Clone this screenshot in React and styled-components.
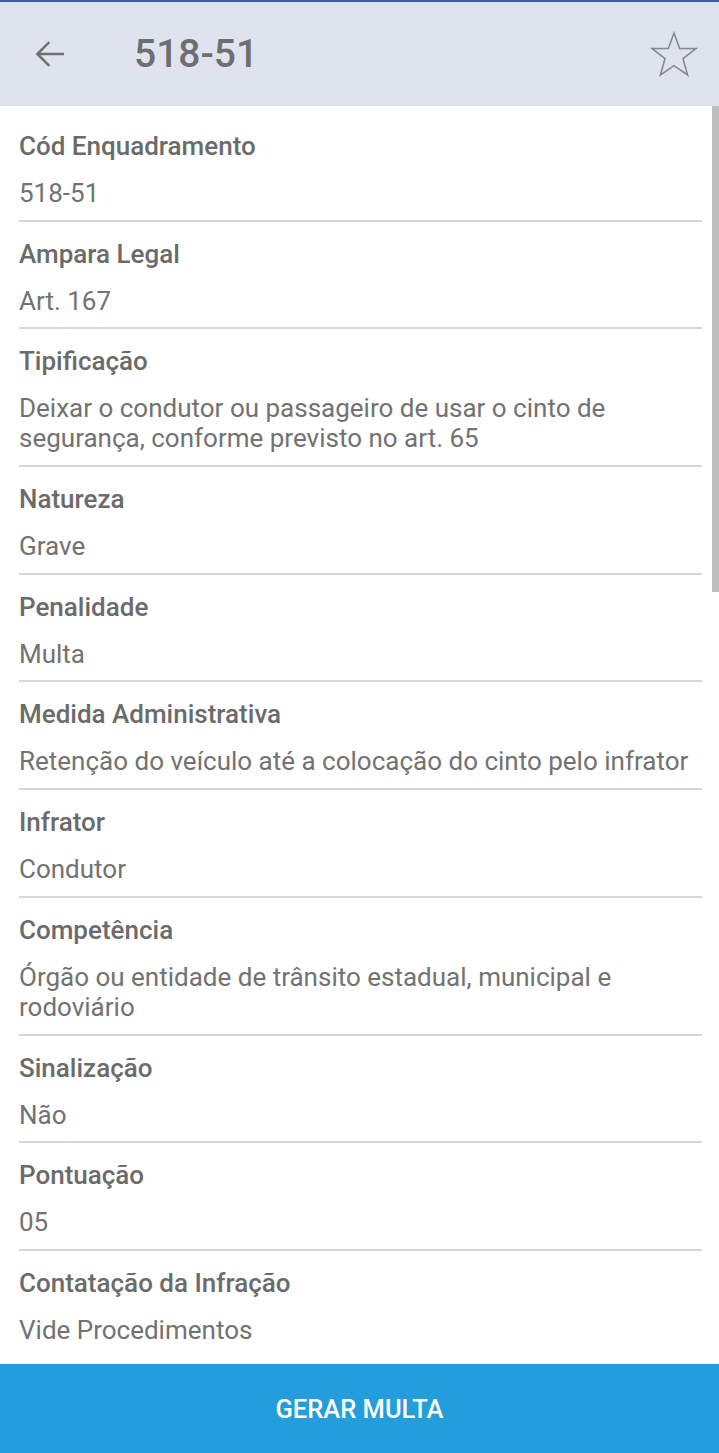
import React from 'react';
import styled, { createGlobalStyle } from 'styled-components';

const GlobalStyle = createGlobalStyle`
  html, body {
    margin: 0;
    padding: 0;
    background: #ffffff;
    font-family: Roboto, "Noto Sans", "Liberation Sans", sans-serif;
  }
`;

const Page = styled.div`
  position: relative;
  width: 719px;
  height: 1453px;
  display: flex;
  flex-direction: column;
  overflow: hidden;
  background: #ffffff;
`;

const Header = styled.header`
  height: 104px;
  flex-shrink: 0;
  display: flex;
  align-items: center;
  background: #dfe3ee;
  border-top: 2px solid #3f5f9a;
  padding: 0 20px 0 31px;
`;

const IconButton = styled.button`
  border: 0;
  background: transparent;
  padding: 0;
  display: flex;
  align-items: center;
  justify-content: center;
  color: #6f6f6f;
`;

const Title = styled.h1`
  margin: 0 0 0 65px;
  flex: 1;
  font-size: 39px;
  font-weight: 500;
  color: #6e6e6e;
`;

const Content = styled.main`
  flex: 1;
  padding: 8px 17px 0 19px;
`;

const Row = styled.section`
  padding: 17px 0 11.7px;
  border-bottom: ${({ $last }) => ($last ? '0' : '2px solid #d6d6d6')};
`;

const Label = styled.div`
  font-size: 26px;
  line-height: 30px;
  font-weight: 500;
  color: #6b6b6b;
`;

const Value = styled.div`
  margin-top: 17px;
  font-size: 26px;
  line-height: 30px;
  color: #727272;
`;

const ScrollThumb = styled.div`
  position: absolute;
  top: 106px;
  right: 0;
  width: 7px;
  height: 486px;
  background: #bdbdbd;
`;

const ActionButton = styled.button`
  height: 89px;
  flex-shrink: 0;
  border: 0;
  background: #239ddb;
  color: #ffffff;
  font-family: inherit;
  font-size: 25.5px;
  font-weight: 500;
`;

const fields = [
  ['Cód Enquadramento', '518-51'],
  ['Ampara Legal', 'Art. 167'],
  ['Tipificação', 'Deixar o condutor ou passageiro de usar o cinto de segurança, conforme previsto no art. 65'],
  ['Natureza', 'Grave'],
  ['Penalidade', 'Multa'],
  ['Medida Administrativa', 'Retenção do veículo até a colocação do cinto pelo infrator'],
  ['Infrator', 'Condutor'],
  ['Competência', 'Órgão ou entidade de trânsito estadual, municipal e rodoviário'],
  ['Sinalização', 'Não'],
  ['Pontuação', '05'],
  ['Contatação da Infração', 'Vide Procedimentos'],
];

function App() {
  return (
    <>
      <GlobalStyle />
      <Page>
        <Header>
          <IconButton aria-label="Voltar">
            <svg width="38" height="38" viewBox="0 0 24 24" fill="none" stroke="#707070" strokeWidth="1.6" strokeLinecap="square">
              <path d="M20 12H5M11 5l-7 7 7 7" />
            </svg>
          </IconButton>
          <Title>518-51</Title>
          <IconButton aria-label="Favoritar">
            <svg width="50" height="48" viewBox="0 0 50 48" fill="none" stroke="#8a8a8a" strokeWidth="1.6" strokeLinejoin="miter">
              <path d="M25 3 L30.6 18.4 L47 18.6 L34 28.6 L38.6 45 L25 35.6 L11.4 45 L16 28.6 L3 18.6 L19.4 18.4 Z" />
            </svg>
          </IconButton>
        </Header>
        <Content>
          {fields.map(([label, value], i) => (
            <Row key={label} $last={i === fields.length - 1}>
              <Label>{label}</Label>
              <Value>{value}</Value>
            </Row>
          ))}
        </Content>
        <ActionButton>GERAR MULTA</ActionButton>
        <ScrollThumb />
      </Page>
    </>
  );
}

export default App;
